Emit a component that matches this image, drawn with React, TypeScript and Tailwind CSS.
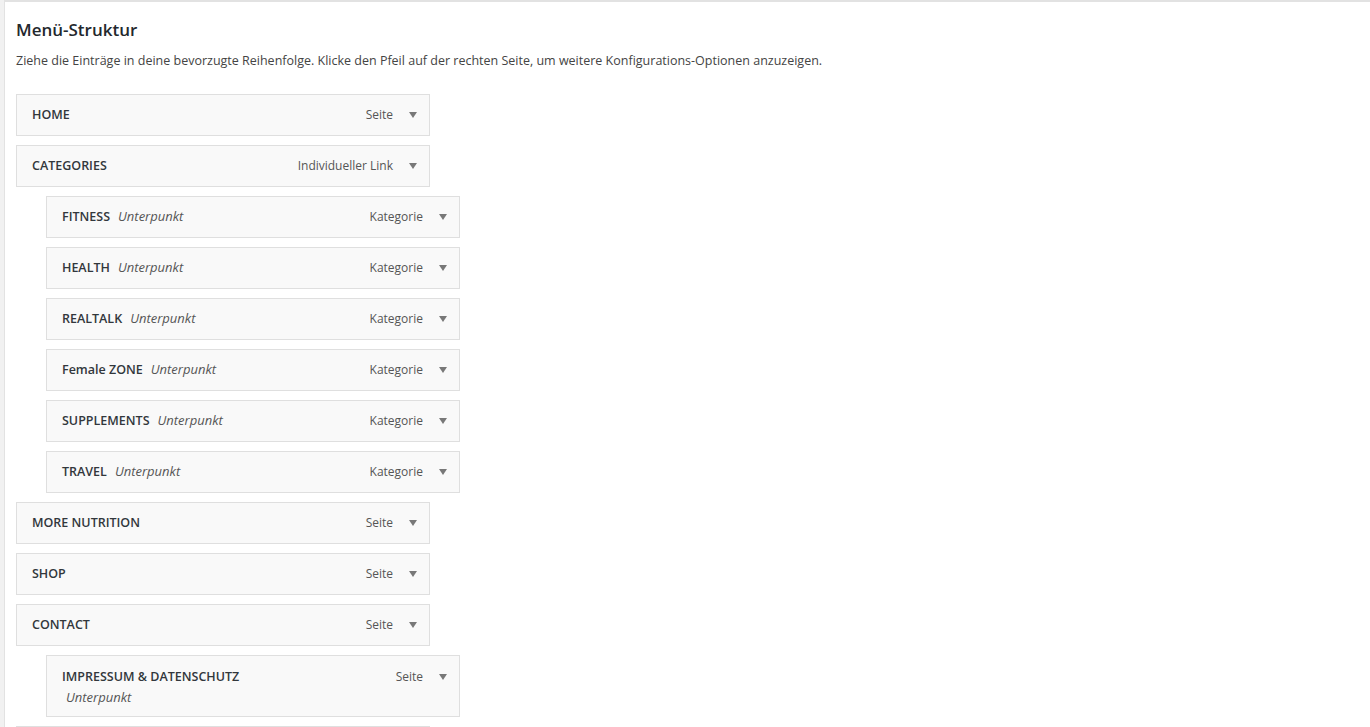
import React from 'react';

type MenuItem = {
  title: string;
  type: string;
  depth: 0 | 1;
  stacked?: boolean;
};

const items: MenuItem[] = [
  { title: 'HOME', type: 'Seite', depth: 0 },
  { title: 'CATEGORIES', type: 'Individueller Link', depth: 0 },
  { title: 'FITNESS', type: 'Kategorie', depth: 1 },
  { title: 'HEALTH', type: 'Kategorie', depth: 1 },
  { title: 'REALTALK', type: 'Kategorie', depth: 1 },
  { title: 'Female ZONE', type: 'Kategorie', depth: 1 },
  { title: 'SUPPLEMENTS', type: 'Kategorie', depth: 1 },
  { title: 'TRAVEL', type: 'Kategorie', depth: 1 },
  { title: 'MORE NUTRITION', type: 'Seite', depth: 0 },
  { title: 'SHOP', type: 'Seite', depth: 0 },
  { title: 'CONTACT', type: 'Seite', depth: 0 },
  { title: 'IMPRESSUM & DATENSCHUTZ', type: 'Seite', depth: 1, stacked: true },
  { title: 'BLOG', type: 'Seite', depth: 0 },
];

const Arrow = () => (
  <svg width="8" height="6" viewBox="0 0 8 6" className="shrink-0">
    <path d="M0 0 H8 L4 6 Z" fill="#787878" />
  </svg>
);

const MenuRow: React.FC<{ item: MenuItem }> = ({ item }) => {
  const indent = item.depth === 1 ? 'ml-[30px]' : '';
  if (item.stacked) {
    return (
      <div className={`${indent} w-[414px] h-[62px] shrink-0 border border-[#dfdfdf] bg-[#f9f9f9] flex pl-[15px] pr-[12px] pt-[11px]`}>
        <div className="flex-1">
          <div className="text-[12.5px] font-semibold text-[#32373c] leading-[20px]">{item.title}</div>
          <div className="text-[13px] italic text-[#555] leading-[20px] pl-[4px]">Unterpunkt</div>
        </div>
        <div className="flex items-center h-[20px]">
          <span className="text-[12px] text-[#555] mr-[16px]">{item.type}</span>
          <Arrow />
        </div>
      </div>
    );
  }
  return (
    <div className={`${indent} w-[414px] h-[42px] shrink-0 border border-[#dfdfdf] bg-[#f9f9f9] flex items-center pl-[15px] pr-[12px]`}>
      <div className="flex-1 flex items-baseline gap-[8px]">
        <span className="text-[12.5px] font-semibold text-[#32373c]">{item.title}</span>
        {item.depth === 1 && <span className="text-[13px] italic text-[#555]">Unterpunkt</span>}
      </div>
      <span className="text-[12px] text-[#555] mr-[16px]">{item.type}</span>
      <Arrow />
    </div>
  );
};

export default function App() {
  return (
    <div className="flex h-[727px] overflow-hidden bg-white" style={{ fontFamily: '"Open Sans", "Liberation Sans", sans-serif' }}>
      <div className="w-[5px] shrink-0 bg-[#f1f1f1] border-r border-[#e2e2e2]" />
      <div className="flex-1 border-t-2 border-[#e2e2e2] pl-[11px]">
        <h2 className="text-[17px] font-semibold text-[#23282d] mt-[16px] leading-[24px]">Menü-Struktur</h2>
        <p className="text-[12.5px] text-[#444] mt-[10px] leading-[18px]">
          Ziehe die Einträge in deine bevorzugte Reihenfolge. Klicke den Pfeil auf der rechten Seite, um weitere Konfigurations-Optionen anzuzeigen.
        </p>
        <div className="mt-[24px] flex flex-col gap-[9px]">
          {items.map((item) => (
            <MenuRow key={item.title} item={item} />
          ))}
        </div>
      </div>
    </div>
  );
}
